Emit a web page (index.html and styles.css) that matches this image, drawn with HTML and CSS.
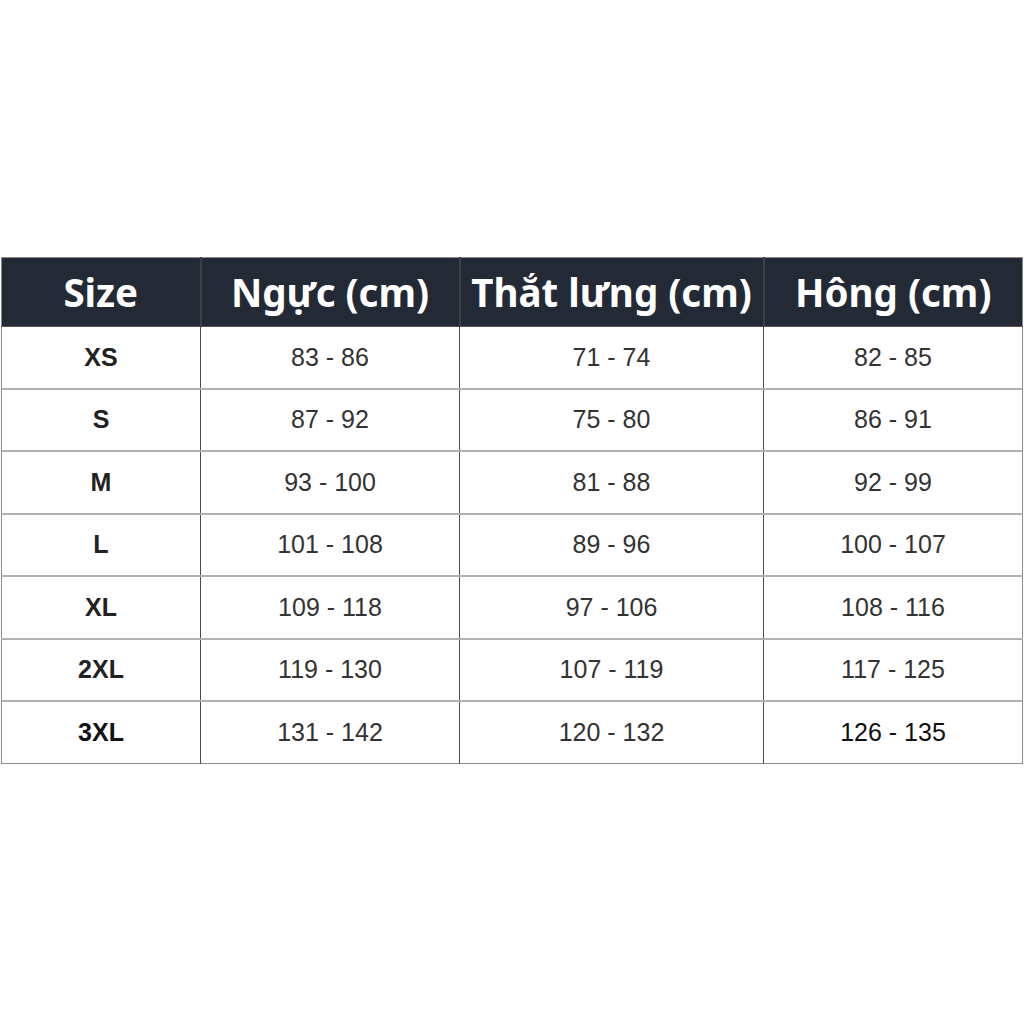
FILE: index.html
```html
<!DOCTYPE html>
<html lang="vi">
<head>
<meta charset="utf-8">
<title>Bảng size</title>
<link rel="stylesheet" href="styles.css">
</head>
<body>
<main class="page">
<table class="size-table">
  <colgroup>
    <col class="c1"><col class="c2"><col class="c3"><col class="c4">
  </colgroup>
  <thead>
    <tr><th>Size</th><th>Ngực (cm)</th><th>Thắt lưng (cm)</th><th>Hông (cm)</th></tr>
  </thead>
  <tbody>
    <tr><td class="sz">XS</td><td>83 - 86</td><td>71 - 74</td><td>82 - 85</td></tr>
    <tr><td class="sz">S</td><td>87 - 92</td><td>75 - 80</td><td>86 - 91</td></tr>
    <tr><td class="sz">M</td><td>93 - 100</td><td>81 - 88</td><td>92 - 99</td></tr>
    <tr><td class="sz">L</td><td>101 - 108</td><td>89 - 96</td><td>100 - 107</td></tr>
    <tr><td class="sz">XL</td><td>109 - 118</td><td>97 - 106</td><td>108 - 116</td></tr>
    <tr><td class="sz">2XL</td><td>119 - 130</td><td>107 - 119</td><td>117 - 125</td></tr>
    <tr><td class="sz dark">3XL</td><td>131 - 142</td><td>120 - 132</td><td class="dark">126 - 135</td></tr>
  </tbody>
</table>
</main>
</body>
</html>
```

FILE: styles.css
```css
html, body {
  margin: 0;
  padding: 0;
  background: #ffffff;
}
.page {
  padding: 257px 2px 0 1px;
}
.size-table {
  width: 1021px;
  border-collapse: collapse;
  table-layout: fixed;
  border: 1px solid #8a8a8a;
}
.c1 { width: 199px; }
.c2 { width: 259px; }
.c3 { width: 304px; }
.c4 { width: 259px; }
.size-table th {
  background: #232a35;
  color: #ffffff;
  font-family: "Noto Sans", "Open Sans", sans-serif;
  font-weight: 700;
  font-size: 38.5px;
  height: 68px;
  padding: 0;
  text-align: center;
  vertical-align: middle;
  border-left: 2px solid #3a3f48;
  border-bottom: 1px solid #555;
  line-height: 1;
}
.size-table th:first-child { border-left: none; }
.size-table td {
  font-family: "Liberation Sans", Arial, sans-serif;
  font-size: 25px;
  color: #333333;
  height: 60.5px;
  padding: 0;
  text-align: center;
  vertical-align: middle;
  border-left: 1px solid #4a4a4a;
  border-top: 2px solid #b0b0b0;
}
.size-table td:first-child { border-left: none; }
.size-table tbody tr:first-child td { border-top: none; }
.size-table td.sz {
  font-weight: 700;
  color: #222222;
}
.size-table td.dark { color: #111111; }
```
